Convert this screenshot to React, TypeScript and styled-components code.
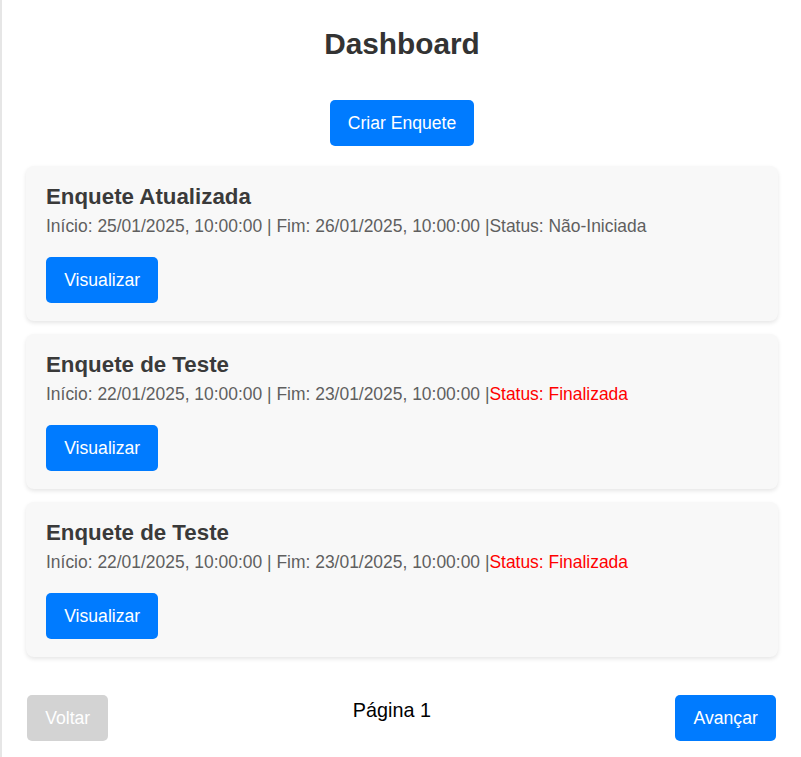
import React from "react";
import styled, { createGlobalStyle } from "styled-components";

const GlobalStyle = createGlobalStyle`
  html, body {
    margin: 0;
    padding: 0;
    background: #ffffff;
    font-family: "Liberation Sans", Arial, sans-serif;
  }
  * { box-sizing: border-box; }
`;

const Page = styled.div`
  min-height: 100vh;
  border-left: 2px solid #e6e6e6;
  padding: 27px 23px 17px 24px;
  display: flex;
  flex-direction: column;
  align-items: stretch;
`;

const Title = styled.h1`
  margin: 0;
  text-align: center;
  font-size: 29.8px;
  line-height: 34.5px;
  font-weight: 700;
  color: #333333;
`;

const CreateRow = styled.div`
  display: flex;
  justify-content: center;
  margin-top: 38.5px;
  margin-bottom: 20px;
`;

const Button = styled.button<{ $disabled?: boolean }>`
  font-family: "Liberation Sans", Arial, sans-serif;
  font-size: 17.6px;
  line-height: 20px;
  padding: 13px 18.2px;
  border: none;
  border-radius: 5px;
  color: #ffffff;
  background: ${(p) => (p.$disabled ? "#d3d3d3" : "#007bff")};
  cursor: ${(p) => (p.$disabled ? "default" : "pointer")};
`;

const List = styled.div`
  display: flex;
  flex-direction: column;
  gap: 13px;
`;

const Card = styled.div`
  background: #f8f8f8;
  border-radius: 8px;
  box-shadow: 0 2px 4px rgba(0, 0, 0, 0.1);
  padding: 18px 20px 18px 20px;
`;

const CardTitle = styled.h3`
  margin: 0 0 7px;
  font-size: 22.3px;
  line-height: 25.3px;
  font-weight: 700;
  color: #3a3a3a;
`;

const Meta = styled.p`
  margin: 0 0 20.4px;
  font-size: 17.45px;
  line-height: 20.2px;
  color: #5f5f5f;
`;

const Status = styled.span<{ $ended?: boolean }>`
  color: ${(p) => (p.$ended ? "#ff0000" : "#5f5f5f")};
`;

const Pagination = styled.div`
  margin-top: 38px;
  padding: 0 2px 0 1px;
  display: flex;
  justify-content: space-between;
  align-items: flex-start;
`;

const PageLabel = styled.span`
  padding-top: 4px;
  font-size: 19.8px;
  line-height: 22.8px;
  color: #000000;
`;

type Poll = {
  title: string;
  start: string;
  end: string;
  status: string;
  ended: boolean;
};

const polls: Poll[] = [
  {
    title: "Enquete Atualizada",
    start: "25/01/2025, 10:00:00",
    end: "26/01/2025, 10:00:00",
    status: "Não-Iniciada",
    ended: false,
  },
  {
    title: "Enquete de Teste",
    start: "22/01/2025, 10:00:00",
    end: "23/01/2025, 10:00:00",
    status: "Finalizada",
    ended: true,
  },
  {
    title: "Enquete de Teste",
    start: "22/01/2025, 10:00:00",
    end: "23/01/2025, 10:00:00",
    status: "Finalizada",
    ended: true,
  },
];

export default function App() {
  return (
    <>
      <GlobalStyle />
      <Page>
        <Title>Dashboard</Title>
        <CreateRow>
          <Button>Criar Enquete</Button>
        </CreateRow>
        <List>
          {polls.map((p, i) => (
            <Card key={i}>
              <CardTitle>{p.title}</CardTitle>
              <Meta>
                Início: {p.start} | Fim: {p.end} |
                <Status $ended={p.ended}>Status: {p.status}</Status>
              </Meta>
              <Button>Visualizar</Button>
            </Card>
          ))}
        </List>
        <Pagination>
          <Button $disabled disabled>
            Voltar
          </Button>
          <PageLabel>Página 1</PageLabel>
          <Button>Avançar</Button>
        </Pagination>
      </Page>
    </>
  );
}
